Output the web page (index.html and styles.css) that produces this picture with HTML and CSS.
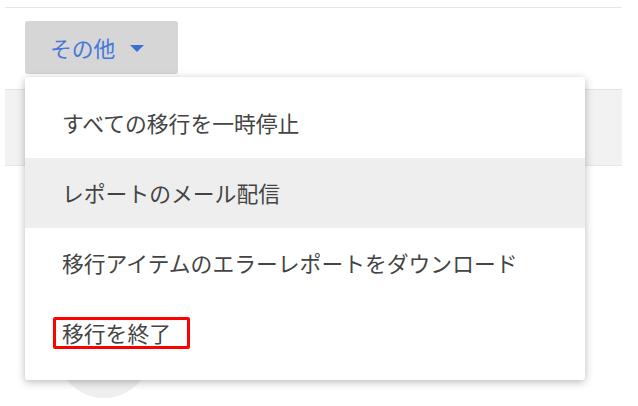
FILE: index.html
```html
<!DOCTYPE html>
<html>
<head>
  <title>その他メニュー</title>
  <link rel="stylesheet" href="styles.css">
</head>
<body>
  <div class="page">
    <div class="top-rule"></div>
    <div class="toolbar">
      <button class="more-button">その他 <span class="caret"></span></button>
    </div>
    <div class="band"></div>
    <div class="avatar"></div>
  </div>

  <div class="menu">
    <div class="menu-item">すべての移行を一時停止</div>
    <div class="menu-item active">レポートのメール配信</div>
    <div class="menu-item">移行アイテムのエラーレポートをダウンロード</div>
    <div class="menu-item"><span class="marked">移行を終了</span></div>
  </div>
</body>
</html>
```

FILE: styles.css
```css
body {
  margin: 0;
  background-color: #fff;
  font-family: "Noto Sans CJK JP", "Noto Sans", sans-serif;
  position: relative;
  height: 406px;
  overflow: hidden;
}

.page {
  padding: 0 16px 0 5px;
}

.top-rule {
  height: 7px;
  border-bottom: 1px solid #e6e6e6;
}

.toolbar {
  padding: 13px 20px 0;
}

.more-button {
  display: flex;
  align-items: center;
  width: 153px;
  height: 53px;
  padding: 0 0 0 25px;
  background-color: #d6d6d6;
  border: none;
  border-radius: 3px;
  color: #4678dc;
  font-family: "Noto Sans CJK JP", sans-serif;
  font-size: 21.8px;
  line-height: 26px;
  cursor: pointer;
}

.caret {
  display: inline-block;
  width: 0;
  height: 0;
  margin-left: 15px;
  margin-top: 2px;
  border-left: 7px solid transparent;
  border-right: 7px solid transparent;
  border-top: 7px solid #3b6fd8;
}

.band {
  margin-top: 15px;
  height: 75px;
  background-color: #f2f2f2;
  border-top: 1px solid #e2e2e2;
  border-bottom: 1px solid #e6e6e6;
}

.avatar {
  width: 94px;
  height: 94px;
  margin: 138px 0 0 52px;
  border-radius: 50%;
  background-color: #efefef;
}

.menu {
  position: absolute;
  left: 25px;
  top: 77px;
  width: 560px;
  padding: 11px 0 12px;
  background-color: #fff;
  border-radius: 3px;
  box-shadow: 0 2px 8px rgba(0, 0, 0, 0.28);
}

.menu-item {
  display: flex;
  align-items: center;
  height: 70px;
  padding-left: 37px;
  color: #444;
  font-size: 21.8px;
  line-height: 26px;
}

.menu-item.active {
  background-color: #eeeeee;
}

.marked {
  display: inline-block;
  margin-left: -9px;
  padding: 0 16px 0 6px;
  border: 3px solid #f00;
  border-radius: 2px;
}
```
